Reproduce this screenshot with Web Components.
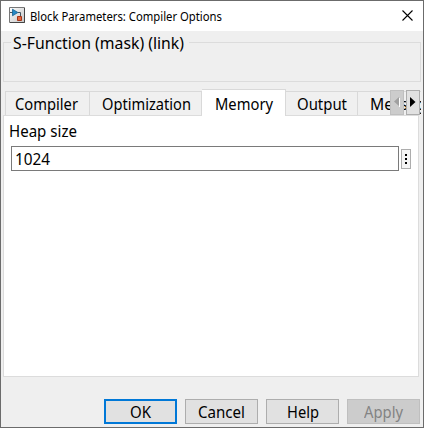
<!DOCTYPE html>
<html lang="en"><head><meta charset="utf-8"><title>Block Parameters: Compiler Options</title>
<style>html,body{margin:0;width:424px;height:428px;overflow:hidden;background:#efefef}body{font:16px/20px "Noto Sans","Open Sans",sans-serif;color:#000}</style></head><body>
<param-dialog></param-dialog>
<script>
const define=(name,html,setup)=>customElements.define(name,class extends HTMLElement{
 connectedCallback(){if(this.shadowRoot)return;const r=this.attachShadow({mode:'open'});r.innerHTML=html;if(setup)setup(this,r)}
});
// A label whose glyph run is scaled to the width given in its w attribute.
define('ui-label',`<style>:host{display:block;white-space:pre;flex:none}span{display:inline-block;transform-origin:0 50%}</style><span><slot></slot></span>`,(h,r)=>{
 const w=+h.getAttribute('w'),s=r.querySelector('span');h.style.width=w+'px';s.style.transform=`scaleX(${w/s.getBoundingClientRect().width})`;
});
define('title-bar',`<style>:host{display:flex;height:30px;background:#fff;align-items:center;padding:0 10px 2px 8px;box-sizing:border-box;font-size:11.7px;line-height:16px}.t{margin-left:5px;padding-top:1px;flex:1}svg{display:block;flex:none}</style>
<svg width="16" height="16" viewBox="0 0 16 16"><defs><linearGradient id="g" x2="1" y2="1"><stop offset="0" stop-color="#fff"/><stop offset="1" stop-color="#c4c4c4"/></linearGradient></defs><path fill="url(#g)" stroke="#777" d="M.5.5h15v15H.5z"/><path d="M1 15.5h14.5V1" fill="none" stroke="#444"/><path d="M1 5.5h3M9 5.5h2.5V9" fill="none" stroke="#46555f"/><path d="M3.5 2.2v6.6l5.4-3.3z" fill="#2689c5" stroke="#14618f" stroke-width=".8"/><path d="M8.5 9.5h4v4h-4z" fill="#e5673c" stroke="#a63416"/></svg>
<div class="t"><slot></slot></div><svg width="11" height="11" viewBox="0 0 11 11"><path d="M.5.5l10 10M10.5.5l-10 10" stroke="#000" stroke-width="1.1"/></svg>`);
define('group-box',`<style>:host{display:block;box-sizing:border-box;height:40px;margin:11px 2px 0;border:1px solid #dcdcdc}div{width:178px;margin:-10px 0 0 7px;padding-left:2px;box-sizing:border-box;background:#efefef}</style><div><slot></slot></div>`);
define('tab-item',`<style>:host{display:block;box-sizing:border-box;flex:none;height:24px;border-top:1px solid #d9d9d9;border-right:1px solid #d9d9d9;background:#f0f0f0;padding:2px 0 0 9px}:host([first]){border-left:1px solid #d9d9d9}:host([selected]){height:27px;background:#fff;padding-top:4px;margin-bottom:-1px;position:relative}</style><slot></slot>`);
define('scroll-button',`<style>:host{display:flex;box-sizing:border-box;width:14px;height:25px;border:1px solid #adadad;background:#e1e1e1;align-items:center;justify-content:center;padding-bottom:2px}:host([disabled]){background:#ccc;border-color:#bfbfbf}svg{display:block}</style><svg width="6" height="10"></svg>`,(h,r)=>{
 r.querySelector('svg').innerHTML=h.hasAttribute('disabled')?'<path d="M5.5 1v9" stroke="#fff"/><path d="M5 0v9L0 4.5z" fill="#a0a0a0"/>':'<path d="M0 0v10l5.5-5z" fill="#000"/>';
});
define('push-button',`<style>:host{display:flex;box-sizing:border-box;width:73px;height:25px;border:1px solid #adadad;background:#e1e1e1;align-items:center;justify-content:center;padding-top:1px}:host([default]){border:2px solid #0078d7}:host([disabled]){background:#ccc;border-color:#bfbfbf;color:#838383}</style><slot></slot>`);
define('text-field',`<style>:host{display:block;box-sizing:border-box;width:388px;height:25px;border:1px solid #7a7a7a;background:#fff;padding:2px 3px}</style><slot></slot>`);
define('more-button',`<style>:host{display:flex;box-sizing:border-box;width:10px;height:20px;border:1px solid #adadad;background:#f4f4f4;align-items:center;justify-content:center}svg{display:block}</style><svg width="2" height="10"><path d="M0 0h2v2H0zM0 4h2v2H0zM0 8h2v2H0z"/></svg>`);
define('param-dialog',`<style>
:host{display:flex;flex-direction:column;box-sizing:border-box;width:424px;height:428px;border:1px solid #6b6b6b;background:#efefef;overflow:hidden}
.strip{display:flex;height:26px;margin:7px 2px 0 4px;align-items:flex-end;position:relative;flex:none}
.clip{display:flex;align-items:flex-end;width:416px;height:27px;overflow:hidden;margin-bottom:-1px;padding-bottom:1px;box-sizing:border-box;z-index:1}
.clip tab-item[selected]{z-index:2}
.scroll{position:absolute;right:1px;top:1px;display:flex;gap:2px;z-index:3}
.page{box-sizing:border-box;width:416px;height:262px;margin-left:2px;border:1px solid #dcdcdc;background:#fff;padding:5px 7px;flex:none}
.row{display:flex;align-items:center;gap:2px;margin-top:5px}
.page text-field ui-label{margin:0}.page>ui-label{margin-left:-2px}
.foot{display:flex;justify-content:flex-end;gap:8px;margin:22px 3px 0 0}
</style>
<title-bar><ui-label w="192">Block Parameters: Compiler Options</ui-label></title-bar>
<group-box><ui-label w="171">S-Function (mask) (link)</ui-label></group-box>
<div class="strip"><div class="clip">
<tab-item first style="width:85px"><ui-label w="63">Compiler</ui-label></tab-item><tab-item style="width:112px;padding-left:12px"><ui-label w="89">Optimization</ui-label></tab-item><tab-item selected style="width:84px;padding-left:13px"><ui-label w="58">Memory</ui-label></tab-item><tab-item style="width:72px;padding-left:11px"><ui-label w="50">Output</ui-label></tab-item><tab-item style="width:100px;padding-left:12px"><ui-label w="73">Messages</ui-label></tab-item></div>
<div class="scroll"><scroll-button disabled></scroll-button><scroll-button></scroll-button></div></div>
<div class="page"><ui-label w="68">Heap size</ui-label><div class="row"><text-field><ui-label w="35">1024</ui-label></text-field><more-button></more-button></div></div>
<div class="foot"><push-button default><ui-label w="21">OK</ui-label></push-button><push-button><ui-label w="47">Cancel</ui-label></push-button><push-button><ui-label w="32">Help</ui-label></push-button><push-button disabled><ui-label w="39">Apply</ui-label></push-button></div>`);
</script></body></html>
